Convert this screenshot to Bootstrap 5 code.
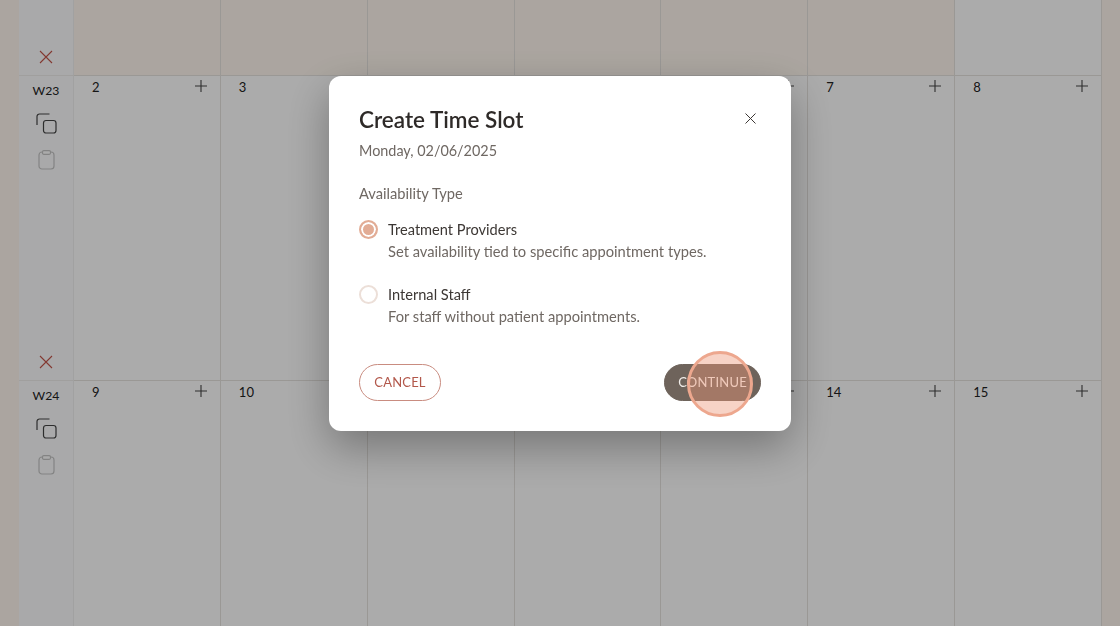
<!DOCTYPE html>
<html lang="en">
<head>
  <meta charset="UTF-8">
  <meta name="viewport" content="width=device-width, initial-scale=1">
  <title>Create Time Slot</title>
  <link href="https://cdn.jsdelivr.net/npm/bootstrap@5.3.3/dist/css/bootstrap.min.css" rel="stylesheet">
  <style>
    body {
      font-family: "Lato", "Open Sans", sans-serif;
      background-color: #fff7ef;
      overflow: hidden;
      height: 626px;
    }
    .cal-grid {
      display: grid;
      grid-template-columns: 55px repeat(7, 1fr);
      grid-template-rows: 76px 305px 260px;
      margin: 0 18px 0 19px;
    }
    .week-cell {
      background-color: #fcfdfe;
      border-right: 1px solid #f0f0f0;
      border-bottom: 1px solid #efeeec;
      padding: 6px 0 11px;
    }
    .week-label {
      font-size: 12.2px;
      line-height: 18px;
      color: #222;
      margin-bottom: 13px;
    }
    .day-cell {
      background-color: #fff;
      border-right: 1px solid #e6e3df;
      border-bottom: 1px solid #e6e3df;
      padding: 2px 13px 0 18px;
      font-size: 13px;
      line-height: 18px;
      color: #222;
    }
    .day-cell.off-month {
      background-color: #fff7ef;
    }
    .cal-shade {
      background-color: rgba(0, 0, 0, .33);
      opacity: 1;
    }
    .slot-dialog {
      width: 462px;
      max-width: 462px;
      margin: 76px auto 0;
    }
    .slot-card {
      border: 0;
      border-radius: 12px;
      box-shadow: 0 16px 44px rgba(0, 0, 0, .32);
      padding: 26px 30px 30px;
      height: 355px;
    }
    .slot-title {
      font-size: 22.5px;
      line-height: 36px;
      font-weight: 600;
      color: #2e2a28;
      margin: 0 0 1px;
    }
    .slot-date {
      font-size: 14.4px;
      line-height: 24px;
      color: #6f6863;
      margin: 0 0 18px;
    }
    .slot-label {
      font-size: 14.7px;
      line-height: 24px;
      color: #6f6863;
      margin-bottom: 13px;
    }
    .slot-close {
      position: absolute;
      top: 37px;
      right: 35px;
      line-height: 0;
    }
    .slot-option {
      margin-bottom: 23px;
    }
    .slot-radio {
      flex: 0 0 19px;
      width: 19px;
      height: 19px;
      border-radius: 50%;
      border: 2px solid #ecdfd8;
      margin: 2px 10px 0 0;
    }
    .slot-radio.picked {
      border-color: #e2ac95;
      background-color: #e2ac95;
      box-shadow: inset 0 0 0 2px #fff;
    }
    .slot-name {
      font-size: 14.6px;
      line-height: 24px;
      color: #3c3734;
    }
    .slot-desc {
      font-size: 14.7px;
      line-height: 18px;
      color: #6f6863;
    }
    .btn-cancel, .btn-continue {
      height: 37px;
      border-radius: 19px;
      font-size: 13px;
      letter-spacing: .2px;
      padding: 0;
      line-height: 35px;
    }
    .btn-cancel {
      width: 82px;
      border: 1px solid #c98c80;
      color: #b2574a;
      background: #fff;
    }
    .btn-continue {
      width: 97px;
      border: 1px solid #6e635b;
      color: #f2eeea;
      background: #6e635b;
    }
    .slot-actions {
      margin-top: 16px;
    }
    .click-ring {
      position: absolute;
      left: 358px;
      top: 275px;
      width: 66px;
      height: 66px;
      border-radius: 50%;
      border: 3px solid #eda78e;
      background-color: rgba(236, 150, 120, .42);
    }
  </style>
</head>
<body>

<div class="cal-grid" id="calGrid"></div>

<div class="modal-backdrop cal-shade"></div>

<div class="modal d-block">
  <div class="modal-dialog slot-dialog">
    <div class="modal-content slot-card">
      <h5 class="slot-title">Create Time Slot</h5>
      <p class="slot-date">Monday, 02/06/2025</p>
      <div class="slot-label">Availability Type</div>

      <div class="d-flex slot-option">
        <span class="slot-radio picked"></span>
        <div>
          <div class="slot-name">Treatment Providers</div>
          <div class="slot-desc">Set availability tied to specific appointment types.</div>
        </div>
      </div>
      <div class="d-flex slot-option">
        <span class="slot-radio"></span>
        <div>
          <div class="slot-name">Internal Staff</div>
          <div class="slot-desc">For staff without patient appointments.</div>
        </div>
      </div>

      <div class="d-flex justify-content-between slot-actions">
        <button class="btn btn-cancel" type="button">CANCEL</button>
        <button class="btn btn-continue" type="button">CONTINUE</button>
      </div>

      <span class="slot-close">
        <svg width="11" height="11" viewBox="0 0 11 11" fill="none" stroke="#3c3734" stroke-width="1"><path d="M.5.5l10 10M10.5.5l-10 10"/></svg>
      </span>
      <span class="click-ring"></span>
    </div>
  </div>
</div>

<script>
  const xIcon = '<svg width="14" height="14" viewBox="0 0 14 14" fill="none" stroke="#c4544a" stroke-width="1.1"><path d="M1 1l12 12M13 1L1 13"/></svg>';
  const copyIcon = '<svg width="21" height="21" viewBox="0 0 21 21" fill="none" stroke="#444" stroke-width="1.2"><rect x="7.5" y="7.5" width="12.5" height="12.5" rx="2.5"/><path d="M13.500 1H3.500A2.500 2.500 0 0 0 1 3.500V12"/></svg>';
  const clipIcon = '<svg width="17" height="20" viewBox="0 0 17 20" fill="none" stroke="#c4c4c4" stroke-width="1.2"><rect x="1" y="2" width="15" height="17" rx="3"/><rect x="4.500" y=".7" width="8" height="3.600" rx="1.200" fill="#fff"/></svg>';
  const plusIcon = '<svg width="12" height="12" viewBox="0 0 12 12" fill="none" stroke="#444" stroke-width="1.1"><path d="M6 0v12M0 6h12"/></svg>';

  const weeks = [
    { label: '', days: ['', '', '', '', '', '', ''], top: true },
    { label: 'W23', days: [2, 3, 4, 5, 6, 7, 8] },
    { label: 'W24', days: [9, 10, 11, 12, 13, 14, 15], last: true }
  ];

  let html = '';
  weeks.forEach(w => {
    html += '<div class="week-cell d-flex flex-column align-items-center">';
    if (w.label) {
      html += `<div class="week-label">${w.label}</div><div class="mb-3 lh-1">${copyIcon}</div><div class="lh-1">${clipIcon}</div>`;
    }
    if (!w.last) html += `<div class="mt-auto lh-1">${xIcon}</div>`;
    html += '</div>';
    w.days.forEach((d, i) => {
      const cls = w.top && i < 6 ? 'off-month' : '';
      const inner = w.top ? '' : `<span>${d}</span><span class="lh-1">${plusIcon}</span>`;
      html += `<div class="day-cell ${cls} d-flex justify-content-between align-items-start">${inner}</div>`;
    });
  });
  document.getElementById('calGrid').innerHTML = html;
</script>

<script src="https://cdn.jsdelivr.net/npm/bootstrap@5.3.3/dist/js/bootstrap.bundle.min.js"></script>
</body>
</html>
